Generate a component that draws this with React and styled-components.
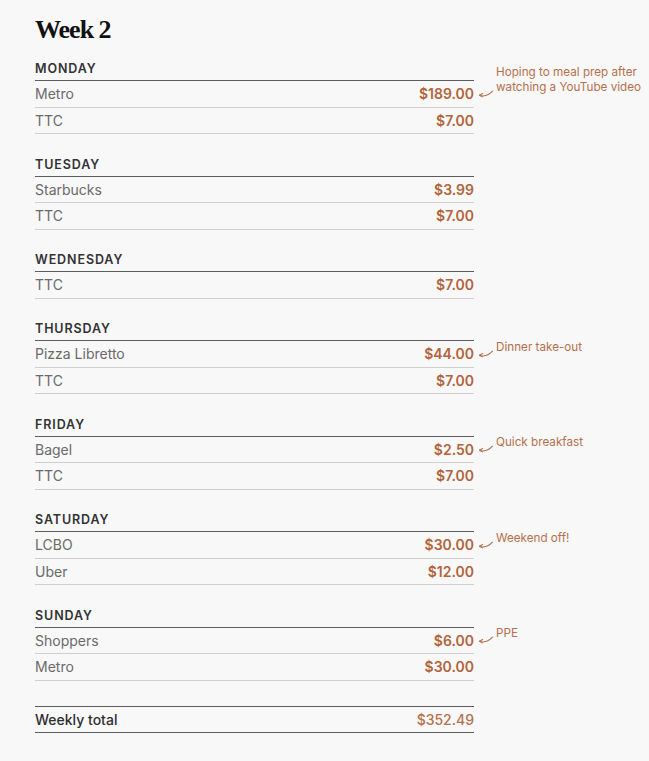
import React from 'react';
import styled, { createGlobalStyle } from 'styled-components';

const GlobalStyle = createGlobalStyle`
  html, body {
    margin: 0;
    padding: 0;
    background: #f8f8f9;
  }
  body {
    font-family: Inter, "Noto Sans", "Liberation Sans", sans-serif;
  }
`;

const week = [
  {
    day: 'Monday',
    items: [
      { name: 'Metro', amount: '$189.00', note: ['Hoping to meal prep after', 'watching a YouTube video'] },
      { name: 'TTC', amount: '$7.00' },
    ],
  },
  {
    day: 'Tuesday',
    items: [
      { name: 'Starbucks', amount: '$3.99' },
      { name: 'TTC', amount: '$7.00' },
    ],
  },
  {
    day: 'Wednesday',
    items: [{ name: 'TTC', amount: '$7.00' }],
  },
  {
    day: 'Thursday',
    items: [
      { name: 'Pizza Libretto', amount: '$44.00', note: ['Dinner take-out'] },
      { name: 'TTC', amount: '$7.00' },
    ],
  },
  {
    day: 'Friday',
    items: [
      { name: 'Bagel', amount: '$2.50', note: ['Quick breakfast'] },
      { name: 'TTC', amount: '$7.00' },
    ],
  },
  {
    day: 'Saturday',
    items: [
      { name: 'LCBO', amount: '$30.00', note: ['Weekend off!'] },
      { name: 'Uber', amount: '$12.00' },
    ],
  },
  {
    day: 'Sunday',
    items: [
      { name: 'Shoppers', amount: '$6.00', note: ['PPE'] },
      { name: 'Metro', amount: '$30.00' },
    ],
  },
];

function Arrow() {
  return (
    <ArrowSvg width="16" height="8" viewBox="0 0 16 8" fill="none">
      <path d="M1.5 5.2 Q8 7.8 14.5 1.2" stroke="#b5704c" strokeWidth="1.1" strokeLinecap="round" />
      <path d="M1.5 5.2 L4.6 3.6 M1.5 5.2 L4.4 6.9" stroke="#b5704c" strokeWidth="1.1" strokeLinecap="round" />
    </ArrowSvg>
  );
}

function App() {
  return (
    <Page>
      <GlobalStyle />
      <Title>Week 2</Title>

      {week.map((d) => (
        <Section key={d.day}>
          <DayHeader>{d.day}</DayHeader>
          {d.items.map((item, i) => (
            <Row key={i}>
              <Name>{item.name}</Name>
              <Amount>{item.amount}</Amount>
              {item.note && (
                <>
                  <Arrow />
                  <Note>
                    {item.note.map((line) => (
                      <div key={line}>{line}</div>
                    ))}
                  </Note>
                </>
              )}
            </Row>
          ))}
        </Section>
      ))}

      <TotalRow>
        <TotalLabel>Weekly total</TotalLabel>
        <TotalAmount>$352.49</TotalAmount>
      </TotalRow>
    </Page>
  );
}

let Page = styled.div`
  width: 439px;
  padding: 14px 0 40px 35px;
`;

let Title = styled.h1`
  margin: 0 0 15px;
  font-family: "Liberation Serif", "DejaVu Serif", serif;
  font-size: 26px;
  line-height: 32px;
  font-weight: 700;
  letter-spacing: -1px;
  color: #111;
`;

let Section = styled.section`
  & + & {
    margin-top: 22.5px;
  }
`;

let DayHeader = styled.div`
  font-size: 12.5px;
  line-height: 16px;
  font-weight: 600;
  letter-spacing: 0.9px;
  text-transform: uppercase;
  color: #333;
  padding-bottom: 3px;
  border-bottom: 1px solid #5c5c5c;
`;

let Row = styled.div`
  position: relative;
  display: flex;
  align-items: center;
  justify-content: space-between;
  height: 25.5px;
  border-bottom: 1px solid #cfcfcf;
`;

let Name = styled.span`
  font-size: 14px;
  color: #6a6a6a;
`;

let Amount = styled.span`
  font-size: 14px;
  font-weight: 600;
  color: #b2643b;
`;

let ArrowSvg = styled.svg`
  position: absolute;
  left: calc(100% + 4px);
  top: calc(50% - 4px);
`;

let Note = styled.div`
  position: absolute;
  left: calc(100% + 22px);
  bottom: 12px;
  width: 160px;
  font-size: 11.7px;
  line-height: 15px;
  color: #b5704c;
  white-space: nowrap;
`;

let TotalRow = styled.div`
  margin-top: 25px;
  display: flex;
  align-items: center;
  justify-content: space-between;
  height: 25px;
  border-top: 1px solid #5c5c5c;
  border-bottom: 1px solid #5c5c5c;
`;

let TotalLabel = styled.span`
  font-size: 14px;
  font-weight: 500;
  color: #2e2e2e;
`;

let TotalAmount = styled.span`
  font-size: 14px;
  font-weight: 500;
  color: #b5704c;
`;

export default App;
